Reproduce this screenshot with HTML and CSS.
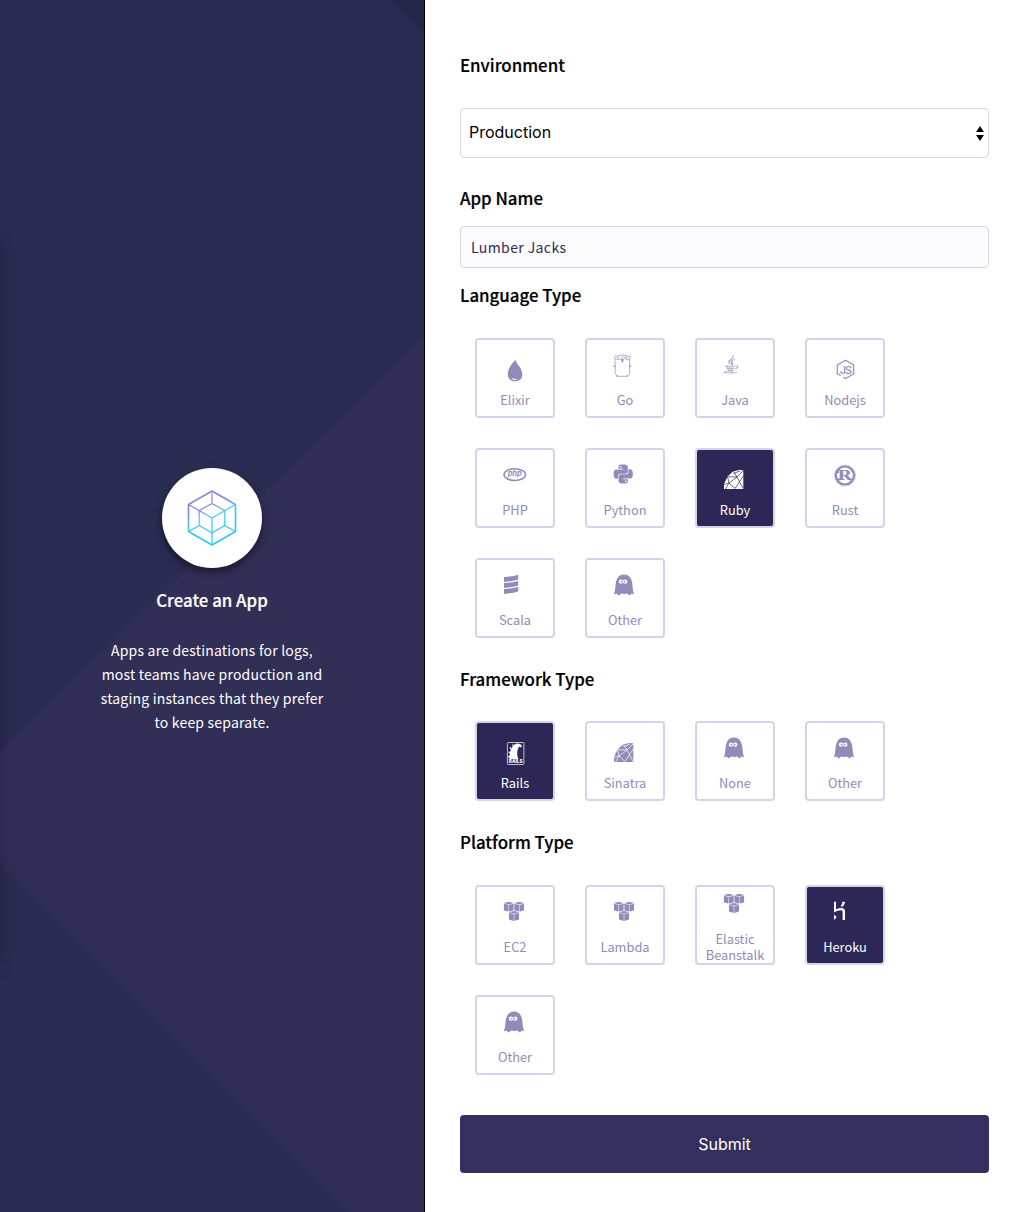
FILE: index.html
```html
<!DOCTYPE html>
<html lang="en">
<head>
<meta charset="utf-8">
<title>Create an App</title>
<link rel="stylesheet" href="styles.css">
</head>
<body>
<svg class="sprite" aria-hidden="true">
  <symbol id="ghost" viewBox="0 0 44 44">
    <path d="M10.700 26.300C12.300 23.500 12.200 20 12.700 15.500C13.500 9.800 16.500 6.500 21 6.500S28.500 9.800 29.300 15.500C29.800 20 29.700 23.500 31.300 26.300L28.600 25.500L26.800 27.400L24 25.500L21.200 25.900L18.400 25.500L15.500 27.400L13.500 25.500Z"/>
    <g class="cut"><circle cx="18" cy="13.600" r="2.200"/><circle cx="22.200" cy="13.600" r="2.200"/></g>
    <circle cx="18.600" cy="13.600" r=".9"/><circle cx="21.600" cy="13.600" r=".9"/>
  </symbol>
  <symbol id="gem" viewBox="0 0 44 44">
    <path d="M11 31V26L14.500 18.500L20 13.500L27 11.800L30.300 12.500V31Z"/>
    <path class="facet" d="M11 26.500L16 25L12.500 31M14.500 18.800L16 25L24 19L14.500 18.800M20.500 13.500L24 19L30 13M24 19L30 30.300M16 25L22 30.500L30.300 18M20.500 15.500L27.500 12.800"/>
  </symbol>
  <symbol id="cube" viewBox="0 0 10 10">
    <path d="M5 0L9.800 1.300L5 2.700L.2 1.300ZM0 1.800L4.750 3.200V10L0 8.400ZM10 1.800L5.250 3.200V10L10 8.400Z"/>
  </symbol>
  <symbol id="aws" viewBox="0 0 44 44">
    <use href="#cube" x="10.700" y="6.700" width="10.100" height="10.100"/>
    <use href="#cube" x="21.200" y="6.700" width="10.100" height="10.100"/>
    <use href="#cube" x="15.950" y="15.900" width="10.100" height="10.100"/>
  </symbol>
</svg>

<div class="page">
  <aside class="intro">
    <svg class="backdrop" viewBox="0 0 424 1212" aria-hidden="true">
      <path class="beam" d="M424 337L0 752V861L351 1212H424Z"/>
      <path class="corner" d="M391 0H424V33Z"/>
    </svg>
    <div class="edge"></div>
    <div class="badge">
      <svg width="50" height="56" viewBox="0 0 50 56">
        <defs>
          <linearGradient id="cubeStroke" gradientUnits="userSpaceOnUse" x1="16" y1="0" x2="30" y2="34">
            <stop offset="0" stop-color="#7f9fc8"/><stop offset=".3" stop-color="#8a7be2"/><stop offset=".5" stop-color="#7c8ce8"/><stop offset=".75" stop-color="#45c8f4"/><stop offset="1" stop-color="#2bc8f8"/>
          </linearGradient>
        </defs>
        <g fill="none" stroke="url(#cubeStroke)" stroke-linejoin="round">
          <path stroke-width="1.600" d="M25 1L48.500 14.500V41.500L25 55L1.500 41.500V14.500Z"/>
          <path stroke-width="1.200" d="M25 1V13.500L37.800 20.500V35.500L48.500 41.500M37.800 35.500L25 43L12.200 35.500V20.500L25 13.500M12.200 35.500L1.500 41.500M1.500 14.500L25 28L48.500 14.500M25 28V55"/>
        </g>
      </svg>
    </div>
    <h1>Create an App</h1>
    <p>Apps are destinations for logs,<br>most teams have production and<br>staging instances that they prefer<br>to keep separate.</p>
  </aside>

  <form class="form">
    <h2>Environment</h2>
    <div class="select">
      <select><option>Production</option></select>
      <svg width="8" height="15" viewBox="0 0 8 15"><path d="M4 0L7.900 6H.1ZM4 15L.1 9H7.900Z"/></svg>
    </div>
    <h2 class="name-title">App Name</h2>
    <input class="name" type="text" value="Lumber Jacks">
    <h2 class="language-title">Language Type</h2>
    <div class="grid">
      <div class="card">
        <svg viewBox="0 0 44 44"><path d="M22.500 12C23.300 16 29.300 20 29.300 26.500C29.300 31 26.500 33.300 22 33.300S14.900 31 14.900 26C14.900 20.500 19 15 22.500 12Z"/><path class="cut" d="M18 30.200Q21.500 29.800 24.500 31.800Q20.500 32.500 18 30.200Z"/></svg>
        <span>Elixir</span>
      </div>
      <div class="card">
        <svg viewBox="0 0 44 44"><g fill="none" stroke="currentColor" stroke-width=".7"><path d="M12.300 10.500C11.500 16 13 19 12 23Q12 28 16 28.300H23Q27 28 26.600 23C25.800 19 27.300 16 26.300 10.500"/><path d="M11 9.500Q11.500 7.500 13.800 8.300Q19.500 5.500 25 8.300Q27.500 7.500 27.700 9.500L26 11Q24.500 12.500 22.500 11.200L20.500 8.500L18 10.800Q14.500 12.500 12.500 10.800Z"/></g><path d="M18.200 11H20.800L20 14.500H18.900ZM10.700 17.500H12.300V19H10.700ZM26.400 17.500H28V19H26.400ZM13.500 27L15 28L13.800 29.300ZM25 27L23.600 28L24.700 29.300ZM14 8.800L16 9L15 10.500ZM22 9.500L24.500 8.500L24 10.500Z"/></svg>
        <span>Go</span>
      </div>
      <div class="card">
        <svg viewBox="0 0 44 44"><path transform="translate(8.300 7) scale(.8)" stroke="currentColor" stroke-width=".25" d="M8.851 18.560s-.917.534.653.714c1.902.218 2.874.187 4.969-.211 0 0 .552.346 1.321.646-4.699 2.013-10.633-.118-6.943-1.149M8.276 15.933s-1.028.761.542.924c2.032.209 3.636.227 6.413-.308 0 0 .384.389.987.602-5.679 1.661-12.007.13-7.942-1.218M13.116 11.475c1.158 1.333-.304 2.533-.304 2.533s2.939-1.518 1.589-3.418c-1.261-1.772-2.228-2.652 3.007-5.688 0-.001-8.216 2.051-4.292 6.573M19.330 20.504s.679.559-.747.991c-2.712.822-11.288 1.069-13.669.033-.856-.373.75-.89 1.254-.998.527-.114.828-.093.828-.093-.953-.671-6.156 1.317-2.643 1.887 9.580 1.553 17.462-.7 14.977-1.820M9.292 13.210s-4.362 1.036-1.544 1.412c1.189.159 3.561.123 5.770-.062 1.806-.152 3.618-.477 3.618-.477s-.637.272-1.098.587c-4.429 1.165-12.986.623-10.522-.568 2.082-1.006 3.776-.892 3.776-.892M17.116 17.584c4.503-2.340 2.421-4.589.968-4.285-.355.074-.515.138-.515.138s.132-.207.385-.297c2.875-1.011 5.086 2.981-.928 4.562 0-.001.07-.062.09-.118M14.401 0s2.494 2.494-2.365 6.330c-3.896 3.077-.888 4.832-.001 6.836-2.274-2.053-3.943-3.858-2.824-5.539 1.644-2.469 6.197-3.665 5.190-7.627"/></svg>
        <span>Java</span>
      </div>
      <div class="card">
        <svg viewBox="0 0 44 44"><path fill="none" stroke="currentColor" stroke-width="1.200" stroke-linejoin="round" d="M17.800 27.500L14.300 25.800V17L22.500 12.300L30.700 17V25.800L22.500 30.500L20.300 29.300"/><text class="js" x="16.800" y="25.600">JS</text></svg>
        <span>Nodejs</span>
      </div>
      <div class="card">
        <svg viewBox="0 0 44 44"><ellipse cx="21.800" cy="16.600" rx="10.800" ry="5.900" fill="none" stroke="currentColor" stroke-width="1.500"/><text class="php" x="21.700" y="18.300">php</text></svg>
        <span>PHP</span>
      </div>
      <div class="card">
        <svg viewBox="0 0 44 44"><path transform="translate(10.600 6.400) scale(.8)" d="M14.250.18l.9.2.73.26.59.3.45.32.34.34.25.34.16.33.1.3.04.26.02.2-.01.13V8.500l-.05.63-.13.55-.21.46-.26.38-.3.31-.33.25-.35.19-.35.14-.33.1-.3.07-.26.04-.21.02H8.770l-.69.05-.59.14-.5.22-.41.27-.33.32-.27.35-.2.36-.15.37-.1.35-.07.32-.04.27-.02.21v3.060H3.170l-.21-.03-.28-.07-.32-.12-.35-.18-.36-.26-.36-.36-.35-.46-.32-.59-.28-.73-.21-.88-.14-1.050-.05-1.230.06-1.220.16-1.040.24-.87.32-.71.36-.57.4-.44.42-.33.42-.24.4-.16.36-.1.32-.05.24-.01h.16l.06.01h8.160v-.83H6.180l-.01-2.750-.02-.37.05-.34.11-.31.17-.28.25-.26.31-.23.38-.2.44-.18.51-.15.58-.12.64-.1.71-.06.77-.04.84-.02 1.270.05zm-6.300 1.980l-.23.33-.08.41.08.41.23.34.33.22.41.09.41-.09.33-.22.23-.34.08-.41-.08-.41-.23-.33-.33-.22-.41-.09-.41.09zm13.090 3.950l.28.06.32.12.35.18.36.27.36.35.35.47.32.59.28.73.21.88.14 1.040.05 1.230-.06 1.230-.16 1.040-.24.86-.32.71-.36.57-.4.45-.42.33-.42.24-.4.16-.36.09-.32.05-.24.02-.16-.01h-8.220v.82h5.840l.01 2.760.02.36-.05.34-.11.31-.17.29-.25.25-.31.24-.38.2-.44.17-.51.15-.58.13-.64.09-.71.07-.77.04-.84.01-1.270-.04-1.070-.14-.9-.2-.73-.25-.59-.3-.45-.33-.34-.34-.25-.34-.16-.33-.1-.3-.04-.25-.02-.2.01-.13v-5.340l.05-.64.13-.54.21-.46.26-.38.3-.32.33-.24.35-.2.35-.14.33-.1.3-.06.26-.04.21-.02.13-.01h5.840l.69-.05.59-.14.5-.21.41-.28.33-.32.27-.35.2-.36.15-.36.1-.35.07-.32.04-.28.02-.21V6.070h2.090l.14.01zm-6.470 14.250l-.23.33-.08.41.08.41.23.33.33.23.41.08.41-.08.33-.23.23-.33.08-.41-.08-.41-.23-.33-.33-.23-.41-.08-.41.08z"/></svg>
        <span>Python</span>
      </div>
      <div class="card selected">
        <svg><use href="#gem"/></svg>
        <span>Ruby</span>
      </div>
      <div class="card">
        <svg viewBox="0 0 44 44"><g fill="none" stroke="currentColor"><circle cx="21.900" cy="17.500" r="9" stroke-width="2.200"/><circle cx="21.900" cy="17.500" r="10.400" stroke-width="1" stroke-dasharray="1 1"/></g><path d="M13 20.500H18V22.300H14.500ZM25 20.500H30.500L29 22.300H26ZM13 13.300H16V15H12.500Z"/><text class="rust" x="14.200" y="22" textLength="14.500" lengthAdjust="spacingAndGlyphs">R</text></svg>
        <span>Rust</span>
      </div>
      <div class="card">
        <svg viewBox="0 0 44 44"><path id="band" d="M11 9.100Q20 8.400 25.200 6.700V11.400Q20 13.300 11 14Z"/><use href="#band" y="6"/><use href="#band" y="12"/></svg>
        <span>Scala</span>
      </div>
      <div class="card">
        <svg><use href="#ghost"/></svg>
        <span>Other</span>
      </div>
    </div>
    <h2 class="framework-title">Framework Type</h2>
    <div class="grid framework">
      <div class="card selected">
        <svg viewBox="0 0 44 44"><rect x="14.400" y="11.500" width="16.500" height="22" rx="1" fill="none" stroke="currentColor" stroke-width=".7"/><path d="M16.500 28C16 20 19.500 12.500 25 12.500Q28 12.700 29 15.500L27.800 16.500L26.500 15.500C24 18 23.500 23 25.300 28Z"/><path d="M15.200 25H17V26.500H15.200ZM15.600 20.500L17.300 21L17 22.300L15.500 21.800ZM17 16L18.600 17L18 18.400L16.500 17.300ZM19.800 13L21 14.200L20.400 15.200L19.100 14.200Z"/><text class="rails" x="22.700" y="32.400" textLength="13.800" lengthAdjust="spacingAndGlyphs">RAILS</text></svg>
        <span>Rails</span>
      </div>
      <div class="card">
        <svg><use href="#gem"/></svg>
        <span>Sinatra</span>
      </div>
      <div class="card">
        <svg><use href="#ghost"/></svg>
        <span>None</span>
      </div>
      <div class="card">
        <svg><use href="#ghost"/></svg>
        <span>Other</span>
      </div>
    </div>
    <h2 class="platform-title">Platform Type</h2>
    <div class="grid">
      <div class="card">
        <svg><use href="#aws"/></svg>
        <span>EC2</span>
      </div>
      <div class="card">
        <svg><use href="#aws"/></svg>
        <span>Lambda</span>
      </div>
      <div class="card">
        <svg><use href="#aws"/></svg>
        <span>Elastic<br>Beanstalk</span>
      </div>
      <div class="card selected">
        <svg viewBox="0 0 44 44"><path d="M11 6.700H13V14.200Q16 13 18.500 13Q22 13.100 22 16.500V25H19.600V16.800Q19.600 15.200 18 15.200Q14.500 15.300 11 17.500ZM11 19.600L13.700 22.300L11 25ZM19.500 6.700H22Q21.800 9.300 19.900 11.500H17.500Q19.200 9.300 19.500 6.700Z"/></svg>
        <span>Heroku</span>
      </div>
      <div class="card">
        <svg><use href="#ghost"/></svg>
        <span>Other</span>
      </div>
    </div>
    <button class="submit" type="button">Submit</button>
  </form>
</div>
</body>
</html>
```

FILE: styles.css
```css
* {
  box-sizing: border-box;
}

body {
  margin: 0;
  background: #fff;
  color: #000;
  font-family: "Noto Sans CJK SC", "Noto Sans", sans-serif;
}

.sprite {
  position: absolute;
  width: 0;
  height: 0;
}

.page {
  display: flex;
  height: 1212px;
}

.intro {
  position: relative;
  display: flex;
  flex: 0 0 425px;
  flex-direction: column;
  align-items: center;
  padding-top: 468px;
  border-right: 1px solid #000;
  background: #2b2c52;
  color: #fff;
  text-align: center;
}

.backdrop {
  position: absolute;
  inset: 0;
  width: 424px;
  height: 1212px;
}

.beam {
  fill: #322f57;
}

.corner {
  fill: #26264b;
}

.edge {
  position: absolute;
  left: -12px;
  top: 238px;
  width: 12px;
  height: 729px;
  box-shadow: 0 0 14px rgba(30, 26, 56, .6);
}

.badge {
  position: relative;
  display: flex;
  align-items: center;
  justify-content: center;
  width: 100px;
  height: 100px;
  border-radius: 50%;
  background: #fff;
  box-shadow: 0 4px 8px rgba(0, 0, 0, .5);
}

h1,
h2 {
  margin: 0;
  font-size: 16.850px;
  font-weight: 500;
  line-height: 24px;
  -webkit-text-stroke: .2px currentColor;
}

.intro h1 {
  position: relative;
  margin-top: 20px;
}

.intro p {
  position: relative;
  margin: 26px 0 0;
  font-size: 14px;
  line-height: 24px;
  letter-spacing: .2px;
}

.form {
  display: flex;
  flex: 1;
  flex-direction: column;
  padding: 53px 35px 0;
}

.select {
  position: relative;
  height: 50px;
  margin-top: 31px;
}

.select select {
  width: 100%;
  height: 50px;
  padding: 0 8px 2px;
  border: 1px solid #d7d2ec;
  border-radius: 4px;
  background: #fff;
  color: #000;
  font: 16px Inter, sans-serif;
  appearance: none;
}

.select svg {
  position: absolute;
  right: 5px;
  top: 18px;
}

.name-title {
  margin-top: 28px;
}

.name {
  height: 42px;
  margin-top: 16px;
  padding: 0 10px 1px;
  border: 1px solid #d7d2ec;
  border-radius: 4px;
  background: #fcfcfe;
  color: #2f2a5a;
  font: 14px "Noto Sans CJK SC", sans-serif;
  letter-spacing: .4px;
}

.language-title {
  margin-top: 15px;
}

.framework-title,
.platform-title {
  margin-top: 29px;
}

.grid {
  display: grid;
  grid-template-columns: repeat(4, 80px);
  gap: 30px;
  margin-top: 31px;
  padding-left: 15px;
}

.framework {
  margin-top: 30px;
}

.card {
  --paper: #fff;
  display: flex;
  flex-direction: column;
  align-items: center;
  justify-content: center;
  height: 80px;
  border: 2px solid #d7d2ec;
  border-radius: 4px;
  background: var(--paper);
  color: #928bb9;
  font-size: 12.800px;
  line-height: 16px;
  text-align: center;
}

.card.selected {
  --paper: #2d2757;
  color: #fff;
}

.card svg {
  flex: none;
  width: 44px;
  height: 44px;
  fill: currentColor;
}

.cut {
  fill: var(--paper);
}

.facet {
  fill: none;
  stroke: var(--paper);
  stroke-width: .7;
}

.js {
  font: 500 11px Inter, sans-serif;
  letter-spacing: -1px;
}

.php {
  font: italic 700 7.500px Inter, sans-serif;
  text-anchor: middle;
}

.rust {
  font: 700 12.500px "DejaVu Serif", serif;
}

.rails {
  font: 800 5px Inter, sans-serif;
  text-anchor: middle;
}

.submit {
  height: 58px;
  margin-top: 40px;
  border: 0;
  border-radius: 4px;
  background: #332f5f;
  color: #fff;
  font: 16px Inter, sans-serif;
}
```
